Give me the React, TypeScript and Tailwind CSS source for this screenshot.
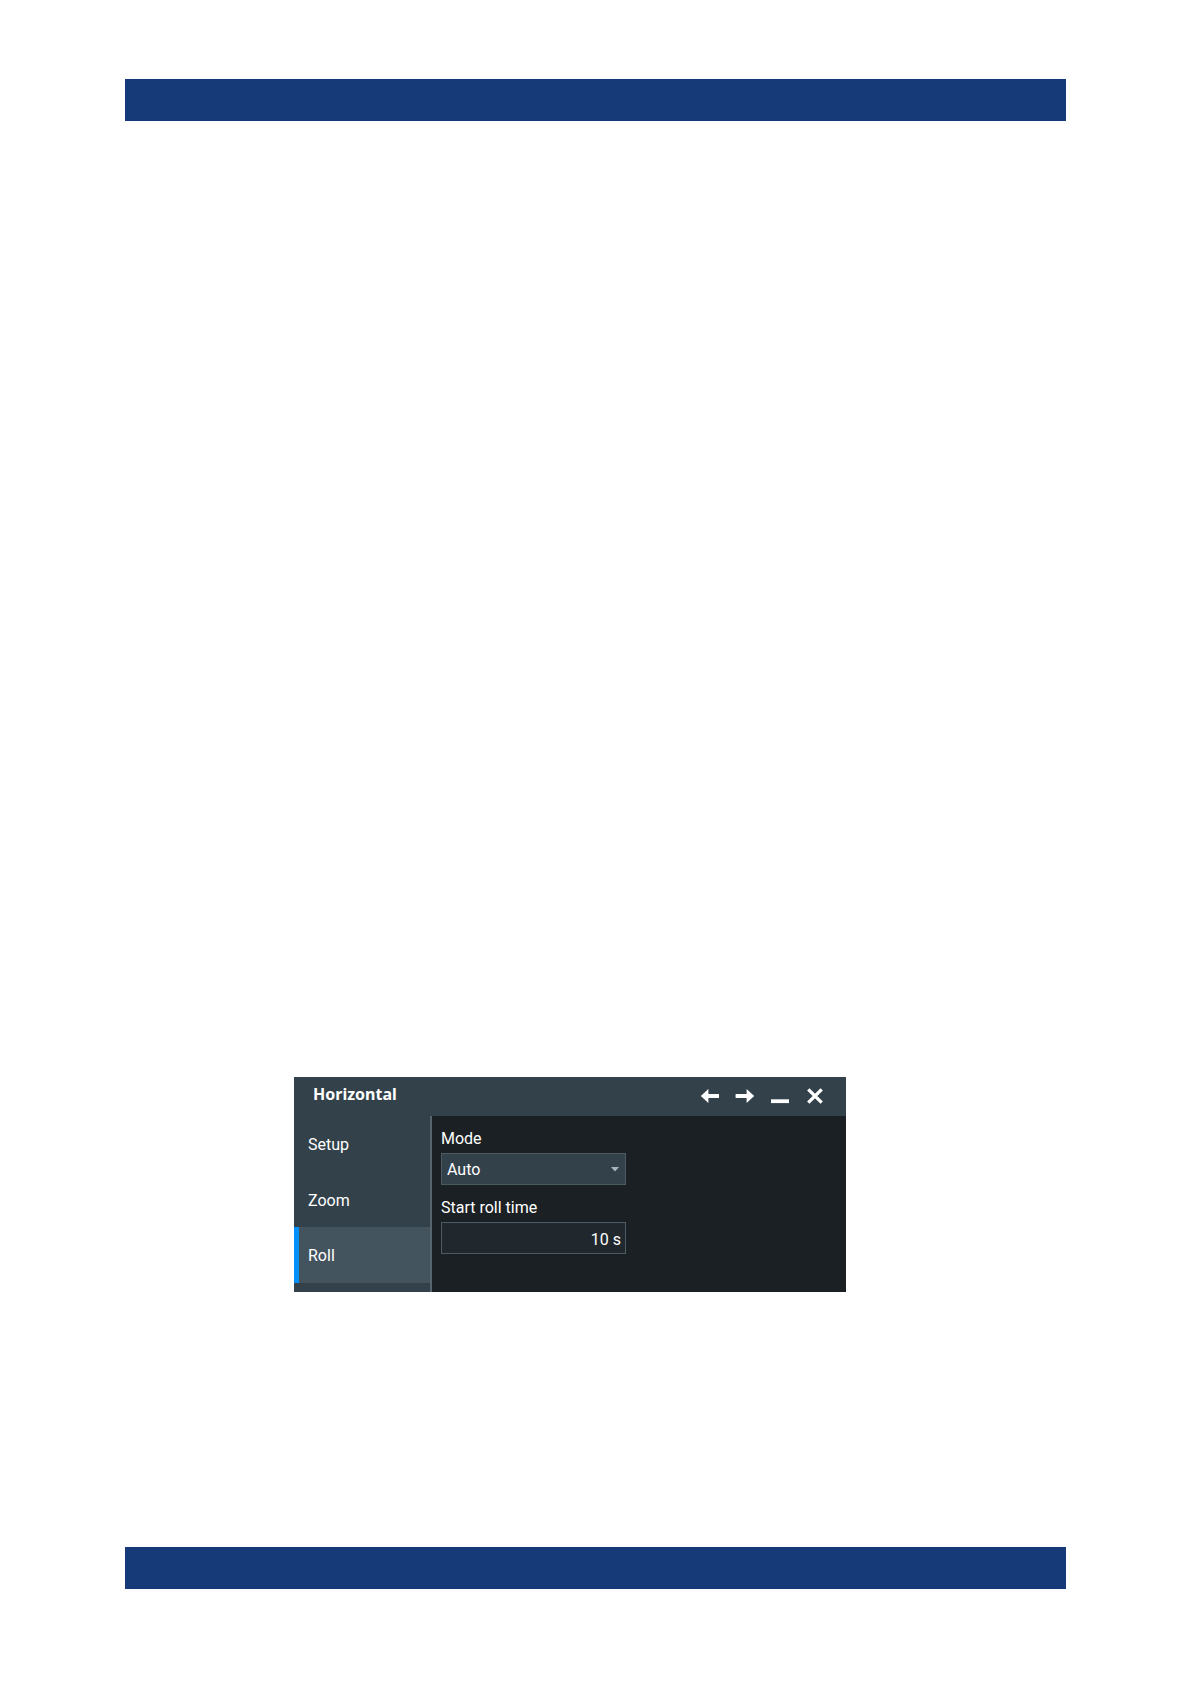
import React, { useState } from 'react';
import clsx from 'clsx';

const TABS = ['Setup', 'Zoom', 'Roll'];
const MODES = ['Auto', 'Off'];

function WindowControls() {
  return (
    <div className="flex items-center gap-[13px] pr-5 pb-0.5">
      <button aria-label="Back" className="flex h-6 w-[22px] items-center justify-center">
        <svg width="20" height="16" viewBox="0 0 20 16" fill="#fff">
          <path d="M0.8 8 L8.4 1 V5.9 H19 V10.1 H8.4 V15 Z" />
        </svg>
      </button>
      <button aria-label="Forward" className="flex h-6 w-[22px] items-center justify-center">
        <svg width="20" height="16" viewBox="0 0 20 16" fill="#fff">
          <path d="M19.2 8 L11.6 1 V5.9 H0.6 V10.1 H11.6 V15 Z" />
        </svg>
      </button>
      <button aria-label="Minimize" className="flex h-6 w-[22px] items-center justify-center">
        <svg width="20" height="16" viewBox="0 0 20 16" fill="#fff">
          <path d="M1 11.3 H19 V15.1 H1 Z" />
        </svg>
      </button>
      <button aria-label="Close" className="flex h-6 w-[22px] items-center justify-center">
        <svg width="20" height="16" viewBox="0 0 20 16" fill="none" stroke="#fff" strokeWidth="3.4">
          <path d="M3.3 1.4 L16.7 14.6 M16.7 1.4 L3.3 14.6" />
        </svg>
      </button>
    </div>
  );
}

function HorizontalDialog() {
  const [activeTab, setActiveTab] = useState('Roll');
  const [mode, setMode] = useState('Auto');
  const [rollTime, setRollTime] = useState('10 s');

  return (
    <section className="w-full max-w-[552px] bg-[#1a2023] text-white">
      <header className="flex h-[39px] items-center justify-between bg-[#33414a] pl-[19px]">
        <h1 className="pb-1.5 font-['Noto_Sans',sans-serif] text-[16px] leading-6 font-bold">Horizontal</h1>
        <WindowControls />
      </header>

      <div className="flex h-44">
        <nav className="flex w-[138px] shrink-0 flex-col border-r-2 border-[#56656e] bg-[#33414a] pb-[9px]">
          {TABS.map(tab => (
            <button
              key={tab}
              onClick={() => setActiveTab(tab)}
              className={clsx(
                'flex-1 border-l-[5px] pt-0.5 pl-[9px] text-left',
                activeTab === tab ? 'border-[#008ffb] bg-[#44545f]' : 'border-transparent'
              )}
            >
              {tab}
            </button>
          ))}
        </nav>

        <div className="flex flex-1 flex-col gap-[11px] pt-[11px] pl-[9px]">
          <div className="flex flex-col gap-0.5">
            <label htmlFor="mode" className="leading-6">Mode</label>
            <div className="relative w-[185px]">
              <select
                id="mode"
                value={mode}
                onChange={e => setMode(e.target.value)}
                className="block h-8 w-full appearance-none border border-[#4c5a62] bg-[#33414a] pt-0.5 pl-[5px]"
              >
                {MODES.map(m => (
                  <option key={m}>{m}</option>
                ))}
              </select>
              <svg className="pointer-events-none absolute top-[14px] right-[7px]" width="8" height="5" viewBox="0 0 8 5" fill="#a9b6bd">
                <path d="M0 0 H8 L4 4.6 Z" />
              </svg>
            </div>
          </div>

          <div className="flex flex-col gap-0.5">
            <label htmlFor="roll-time" className="leading-6">Start roll time</label>
            <input
              id="roll-time"
              value={rollTime}
              onChange={e => setRollTime(e.target.value)}
              className="h-8 w-[185px] border border-[#4c5a62] bg-[#20282e] px-1 pt-0.5 text-right"
            />
          </div>
        </div>
      </div>
    </section>
  );
}

export default function App() {
  return (
    <div className="flex min-h-screen flex-col bg-white px-[125px] pt-[79px] pb-[95px] font-[Roboto,sans-serif] text-[16px]">
      <div className="h-[42px] bg-[#163977]" />
      <main className="flex flex-1 flex-col justify-end pt-20 pb-[255px] pl-[169px]">
        <HorizontalDialog />
      </main>
      <div className="h-[42px] bg-[#163977]" />
    </div>
  );
}
